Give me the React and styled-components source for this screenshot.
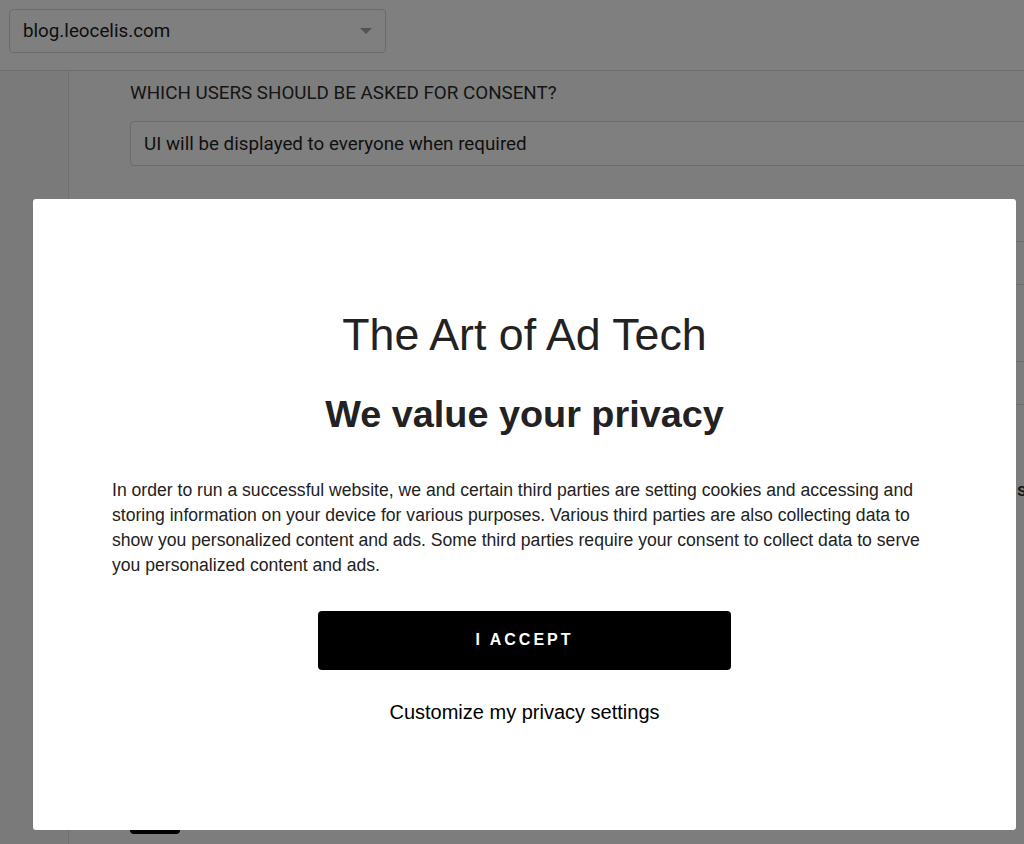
import React from "react";
import styled, { createGlobalStyle } from "styled-components";

const GlobalStyle = createGlobalStyle`
  html, body {
    margin: 0;
    padding: 0;
    overflow: hidden;
    background: #ffffff;
  }
  * {
    box-sizing: border-box;
  }
`;

const Page = styled.div`
  width: 1024px;
  height: 844px;
  overflow: hidden;
  font-family: Roboto, "Liberation Sans", sans-serif;
  color: #1f1f1f;
  display: flex;
  flex-direction: column;
`;

const Header = styled.header`
  height: 71px;
  flex: none;
  padding: 9px;
  background: #ffffff;
  border-bottom: 1px solid #dcdcdc;
`;

const SiteSelect = styled.div`
  width: 377px;
  height: 44px;
  border: 1px solid #d6d6d6;
  border-radius: 4px;
  display: flex;
  align-items: center;
  justify-content: space-between;
  padding: 0 13px 0 13px;
  font-size: 18.8px;
  color: #1a1a1a;
`;

const Caret = styled.span`
  width: 0;
  height: 0;
  border-left: 6px solid transparent;
  border-right: 6px solid transparent;
  border-top: 6px solid #a6a6a6;
`;

const Body = styled.div`
  flex: 1;
  display: flex;
  min-height: 0;
`;

const Sidebar = styled.aside`
  width: 69px;
  flex: none;
  background: #f5f5f5;
  border-right: 1px solid #e0e0e0;
`;

const Content = styled.main`
  flex: none;
  width: 1100px;
  background: #fbfbfb;
  padding: 10px 0 0 61px;
  display: flex;
  flex-direction: column;
`;

const FieldLabel = styled.div`
  font-size: 18.8px;
  line-height: 24px;
  color: #2b2b2b;
  text-transform: uppercase;
`;

const FieldInput = styled.div`
  margin-top: 16px;
  height: 45px;
  border: 1px solid #d6d6d6;
  border-radius: 4px;
  background: #ffffff;
  display: flex;
  align-items: center;
  padding: 0 13px;
  font-size: 18.8px;
  color: #1f1f1f;
`;

const RowGroup = styled.div`
  margin-top: ${(p) => p.$gap}px;
  height: 44px;
  border-top: 1px solid #dedede;
  border-bottom: 1px solid #dedede;
`;

const SettingRow = styled.div`
  margin-top: 73px;
  display: grid;
  grid-template-columns: 887px auto;
  font-size: 19px;
  font-weight: 500;
  color: #2b2b2b;
`;

const SaveButton = styled.button`
  margin-top: auto;
  margin-bottom: 10px;
  width: 50px;
  height: 36px;
  border: none;
  border-radius: 4px;
  background: #000000;
`;

const Overlay = styled.div`
  position: fixed;
  inset: 0;
  background: rgba(0, 0, 0, 0.5);
`;

const Modal = styled.div`
  position: fixed;
  left: 33px;
  top: 199px;
  width: 983px;
  height: 631px;
  background: #ffffff;
  border-radius: 3px;
  padding: 110px 79px 0;
  display: flex;
  flex-direction: column;
  align-items: center;
  font-family: "Liberation Sans", Arial, sans-serif;
  color: #222222;
`;

const SiteTitle = styled.h1`
  margin: 0;
  font-size: 44.7px;
  font-weight: 400;
  line-height: 1.15;
`;

const Heading = styled.h2`
  margin: 33px 0 0;
  font-size: 37.8px;
  font-weight: 700;
  line-height: 1.15;
`;

const Notice = styled.p`
  margin: 41px 0 0;
  width: 100%;
  font-size: 17.6px;
  line-height: 25px;
  text-align: left;
`;

const AcceptButton = styled.button`
  margin-top: 33px;
  width: 413px;
  height: 59px;
  border: none;
  border-radius: 4px;
  background: #000000;
  color: #ffffff;
  font-family: "Liberation Sans", Arial, sans-serif;
  font-size: 16px;
  font-weight: 700;
  letter-spacing: 3px;
  text-transform: uppercase;
  cursor: pointer;
`;

const CustomizeLink = styled.button`
  margin-top: 31px;
  border: none;
  background: none;
  padding: 0;
  font-family: "Liberation Sans", Arial, sans-serif;
  font-size: 20px;
  line-height: 1.15;
  color: #000000;
  cursor: pointer;
`;

const App = () => {
  return (
    <>
      <GlobalStyle />
      <Page>
        <Header>
          <SiteSelect>
            <span>blog.leocelis.com</span>
            <Caret />
          </SiteSelect>
        </Header>
        <Body>
          <Sidebar />
          <Content>
            <FieldLabel>Which users should be asked for consent?</FieldLabel>
            <FieldInput>UI will be displayed to everyone when required</FieldInput>
            <RowGroup $gap={75} />
            <RowGroup $gap={76} />
            <SettingRow>
              <span>Purposes</span>
              <span>settings</span>
            </SettingRow>
            <SaveButton />
          </Content>
        </Body>
      </Page>
      <Overlay />
      <Modal>
        <SiteTitle>The Art of Ad Tech</SiteTitle>
        <Heading>We value your privacy</Heading>
        <Notice>
          In order to run a successful website, we and certain third parties are
          setting cookies and accessing and storing information on your device for
          various purposes. Various third parties are also collecting data to show
          you personalized content and ads. Some third parties require your consent
          to collect data to serve you personalized content and ads.
        </Notice>
        <AcceptButton>I Accept</AcceptButton>
        <CustomizeLink>Customize my privacy settings</CustomizeLink>
      </Modal>
    </>
  );
};

export default App;
